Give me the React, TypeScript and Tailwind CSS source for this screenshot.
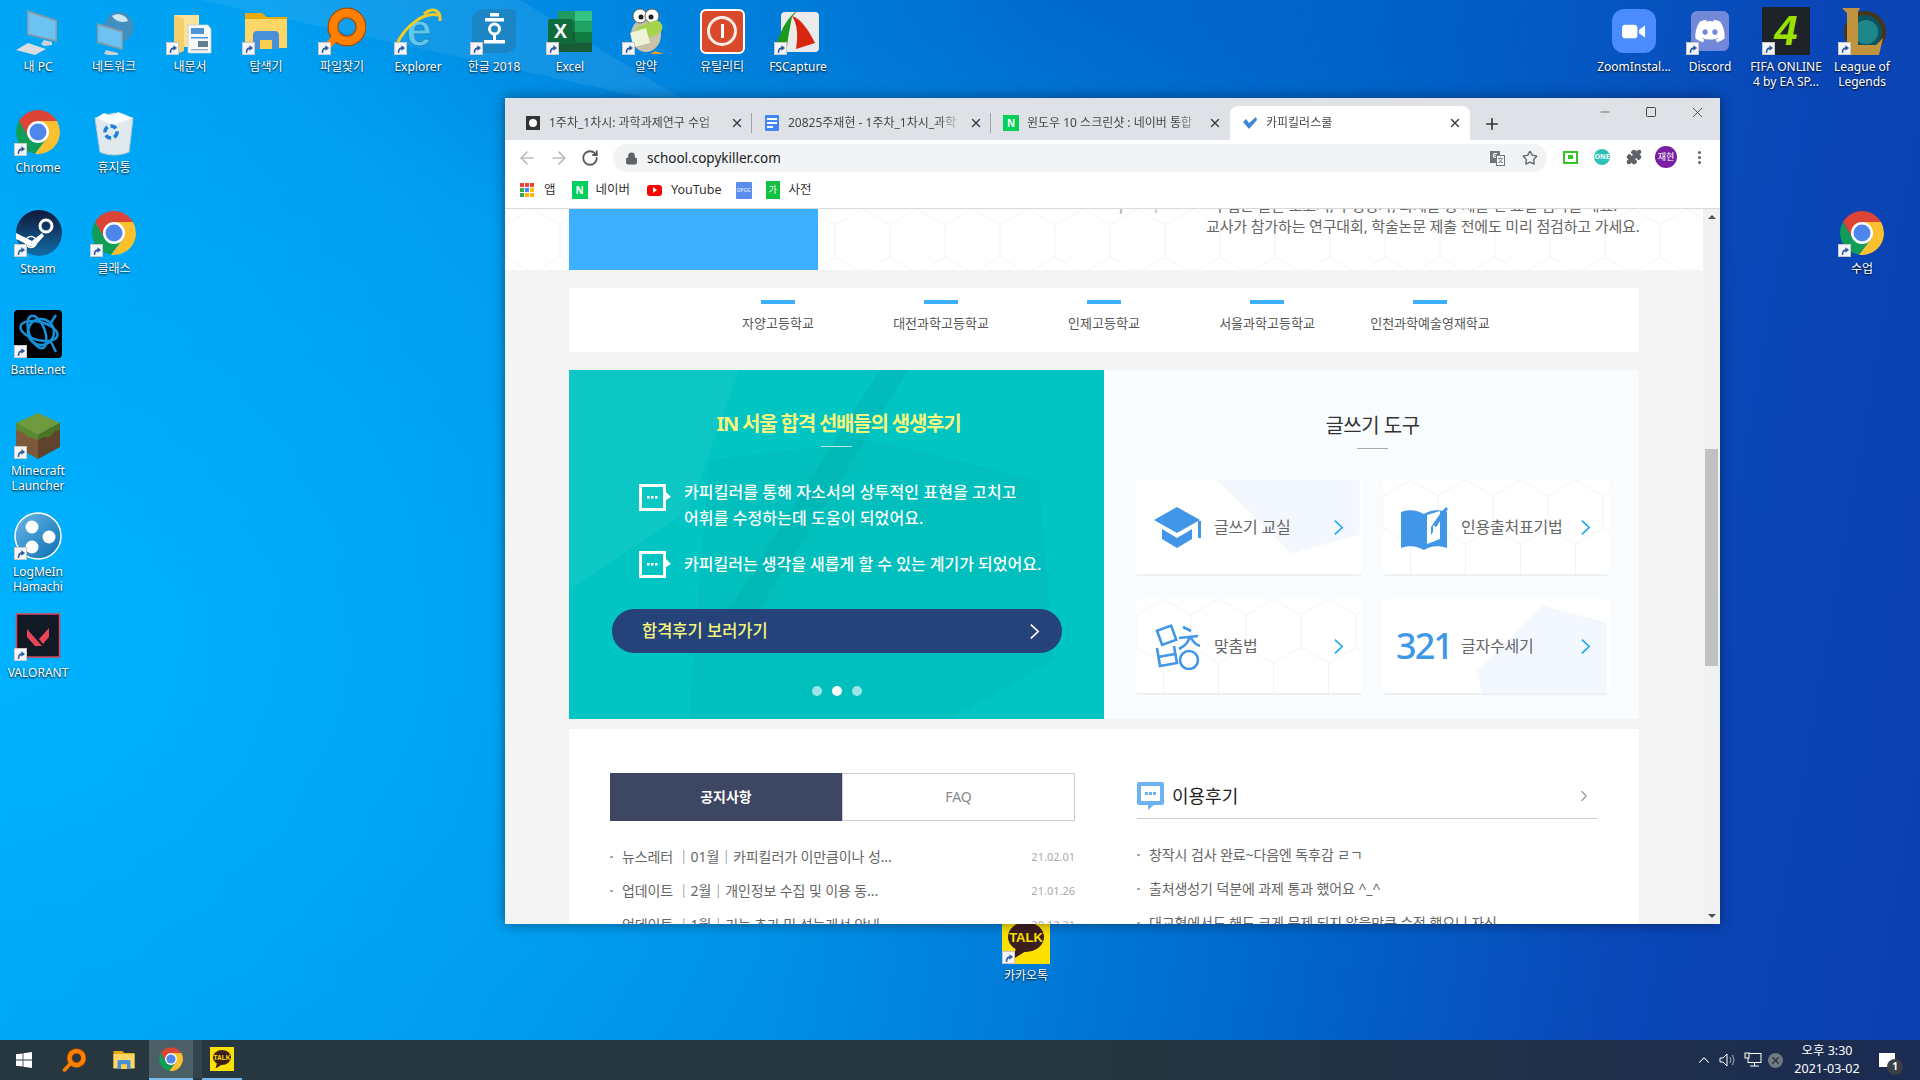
import { ReactNode } from "react";
import { ArrowLeft, ArrowRight, RotateCw, Star, Plus, X, Minus, Square, ChevronRight, ChevronUp, Lock, Puzzle } from "lucide-react";
import { FaDiscord } from "react-icons/fa";

const Shortcut = () => (
  <span className="absolute bottom-0 left-0 flex h-[13px] w-[13px] items-center justify-center border border-[#c8c8c8] bg-[#f4f6fa]">
    <svg viewBox="0 0 12 12" className="h-[11px] w-[11px]">
      <path d="M3 11 C3 7 4 5 7 4.5 V2.5 L11 5.5 L7 8.5 V6.8 C5.5 7 4.6 8.4 4.6 11Z" fill="#2c5aa0" />
    </svg>
  </span>
);

const Chrome = ({ className = "h-12 w-12" }: { className?: string }) => (
  <svg viewBox="0 0 48 48" className={className}>
    <path d="M43 13 A22 22 0 0 0 5 13 L14.5 29.5 L24 13Z" fill="#db4437" />
    <path d="M5 13 A22 22 0 0 0 21 45.8 L33.5 29.5 L14.5 29.5Z" fill="#0f9d58" />
    <path d="M43 13 A22 22 0 0 1 21 45.8 L33.5 29.5 L24 13Z" fill="#fbc02d" />
    <circle cx="24" cy="24" r="11" fill="#fff" />
    <circle cx="24" cy="24" r="8.5" fill="#4f86ec" />
  </svg>
);

const Pc = () => (
  <svg viewBox="0 0 48 48" className="h-12 w-12">
    <path d="M13 3 L43 13 V35 L13 28Z" fill="#8a9ba8" />
    <path d="M14.5 5.5 L41.5 14.5 V33 L14.5 26.5Z" fill="#6cc3f2" />
    <path d="M30 33 L38 35 L38 38 L30 39 L27 37Z" fill="#ccd2d6" />
    <path d="M2 43 L14 36 L32 42 L21 48Z" fill="#d9dde0" />
  </svg>
);

const Network = () => (
  <svg viewBox="0 0 48 48" className="h-12 w-12">
    <circle cx="29" cy="20" r="15" fill="#3f8fc0" />
    <path d="M22 9 C28 5 36 8 38 14 C32 16 26 15 22 9Z" fill="#cfe6ee" />
    <path d="M7 16 L33 24 V43 L7 36Z" fill="#8a9ba8" />
    <path d="M8.5 18.5 L31.5 25.5 V41 L8.5 34.5Z" fill="#6cc3f2" />
    <path d="M16 43 L28 46 L28 50 L14 47Z" fill="#ccd2d6" />
  </svg>
);

const Docs = () => (
  <svg viewBox="0 0 48 48" className="h-12 w-12">
    <path d="M8 8 H33 V40 H16 L8 48Z" fill="#fbe29a" />
    <path d="M8 8 L18 12 V44 L8 48Z" fill="#f4cf6c" />
    <path d="M22 18 H42 L45 22 V46 H22Z" fill="#f7f9fb" stroke="#c5ccd2" strokeWidth=".8" />
    <rect x="25" y="21" width="13" height="6" fill="#4b94d8" />
    <rect x="25" y="30" width="17" height="1.5" fill="#4b94d8" />
    <rect x="32" y="34" width="10" height="6" fill="#5f7e8e" />
    <rect x="25" y="42" width="17" height="1.5" fill="#9fb0bc" />
  </svg>
);

const Explorer = ({ className = "h-12 w-12" }: { className?: string }) => (
  <svg viewBox="0 0 48 48" className={className}>
    <path d="M3 6 H20 L25 10 H45 V40 H3Z" fill="#e8a90a" />
    <path d="M3 12 H45 V41 H3Z" fill="#fcd667" />
    <path d="M11 28 C11 25 13 24 15 24 H33 C35 24 37 25 37 28 V42 H30 V33 H18 V42 H11Z" fill="#4a90d9" />
    <rect x="18" y="33" width="12" height="9" fill="#fbcf4c" />
  </svg>
);

const Finder = ({ className = "h-12 w-12" }: { className?: string }) => (
  <svg viewBox="0 0 48 48" className={className}>
    <circle cx="29" cy="20" r="14" fill="none" stroke="#a14a05" strokeWidth="11" />
    <circle cx="29" cy="20" r="14" fill="none" stroke="#ff7f00" strokeWidth="8.5" />
    <path d="M18 30 L5 44" stroke="#ff7f00" strokeWidth="7" strokeLinecap="round" />
  </svg>
);

const Ie = () => (
  <svg viewBox="0 0 48 48" className="h-12 w-12">
    <text x="25" y="39" textAnchor="middle" fontFamily="'Liberation Sans',sans-serif" fontWeight="700" fontSize="46" fill="#5cc9ee" stroke="#1f86c4" strokeWidth="1">e</text>
    <path d="M2 44 C2 28 26 4 44 8" fill="none" stroke="#f2cc25" strokeWidth="3" />
    <path d="M30 7 C38 0 47 2 46 14" fill="none" stroke="#f2cc25" strokeWidth="3" />
  </svg>
);

const Hangul = () => (
  <svg viewBox="0 0 48 48" className="h-12 w-12">
    <path d="M14 2 H42 C44 2 46 4 46 6 V34 C46 42 42 46 34 46 H12 C6 46 2 42 2 36 V14 C2 7 7 2 14 2Z" fill="#1c85c6" />
    <rect x="20" y="6" width="9" height="3.5" fill="#fff" />
    <rect x="15" y="11" width="19" height="3.5" fill="#fff" />
    <circle cx="24.5" cy="22" r="5" fill="none" stroke="#fff" strokeWidth="3" />
    <rect x="23" y="27" width="3" height="6" fill="#fff" />
    <rect x="14" y="33" width="21" height="3.5" fill="#fff" />
  </svg>
);

const Excel = () => (
  <svg viewBox="0 0 48 48" className="h-12 w-12">
    <rect x="12" y="4" width="34" height="10.5" fill="#1f9a63" />
    <rect x="29" y="4" width="17" height="10.5" fill="#33c481" />
    <rect x="12" y="14.5" width="34" height="10.5" fill="#107c41" />
    <rect x="29" y="14.5" width="17" height="10.5" fill="#21a366" />
    <rect x="12" y="25" width="34" height="10.5" fill="#185c37" />
    <rect x="29" y="25" width="17" height="10.5" fill="#107c41" />
    <rect x="12" y="35.5" width="34" height="9.5" fill="#185c37" />
    <rect x="2" y="12" width="25" height="25" rx="2" fill="#0e6b3a" />
    <text x="14.5" y="31" textAnchor="middle" fontFamily="'Liberation Sans',sans-serif" fontWeight="700" fontSize="20" fill="#fff">X</text>
  </svg>
);

const Pill = () => (
  <svg viewBox="0 0 48 48" className="h-12 w-12">
    <ellipse cx="24" cy="28" rx="15" ry="17" fill="#c8c2a8" />
    <circle cx="18" cy="9" r="7" fill="#fff" stroke="#66604a" />
    <circle cx="30" cy="9" r="7" fill="#fff" stroke="#66604a" />
    <circle cx="19" cy="10" r="2.5" fill="#222" />
    <circle cx="29" cy="10" r="2.5" fill="#222" />
    <rect x="13" y="16" width="28" height="14" rx="7" fill="#a6d34e" transform="rotate(-22 27 23)" />
    <path d="M8 26 L24 21 L28 36 L12 40Z" fill="#eef3d8" />
    <path d="M33 44 L42 47 H28Z" fill="#f0a020" />
  </svg>
);

const Utility = () => (
  <div className="flex h-[45px] w-[45px] items-center justify-center rounded-md border-2 border-white bg-[#d84a2a]">
    <div className="flex h-[30px] w-[30px] items-center justify-center rounded-full border-[3px] border-white/90">
      <div className="h-[14px] w-[3px] bg-white" />
    </div>
  </div>
);

const FsCapture = () => (
  <svg viewBox="0 0 48 48" className="h-12 w-12">
    <rect x="7" y="5" width="38" height="40" rx="4" fill="#eaeaea" />
    <path d="M2 38 C8 20 14 10 24 3 L18 10 C16 20 14 30 13 40Z" fill="#1d9a1d" />
    <path d="M18 9 C28 12 36 26 41 36 L22 42 C24 30 24 18 18 9Z" fill="#d92410" />
  </svg>
);

const Zoom = () => (
  <div className="flex h-11 w-11 items-center justify-center rounded-xl bg-[#4a8cff]">
    <svg viewBox="0 0 28 20" className="h-[17px] w-7">
      <rect x="0" y="2" width="18" height="16" rx="4" fill="#fff" />
      <path d="M20 8 L27 3 V17 L20 12Z" fill="#fff" />
    </svg>
  </div>
);

const Discord = () => (
  <div className="flex h-10 w-[38px] items-center justify-center rounded-md bg-[#7289da]">
    <FaDiscord className="h-8 w-8 text-white" />
  </div>
);

const Fifa = () => (
  <svg viewBox="0 0 48 48" className="h-12 w-12">
    <rect width="48" height="48" fill="#1e2229" />
    <text x="24" y="38" textAnchor="middle" fontFamily="'Liberation Sans',sans-serif" fontStyle="italic" fontWeight="700" fontSize="42" fill="#9be000">4</text>
  </svg>
);

const Lol = () => (
  <svg viewBox="0 0 48 48" className="h-12 w-12">
    <circle cx="27" cy="25" r="19" fill="#0b5560" stroke="#4a3414" strokeWidth="4" />
    <circle cx="28" cy="25" r="12" fill="#2ea8a4" opacity=".6" />
    <path d="M4 1 H22 L20 5 V38 H38 L45 31 L41 48 H6 L9 43 V6Z" fill="#c1933f" />
  </svg>
);

const Recycle = () => (
  <svg viewBox="0 0 48 48" className="h-12 w-12">
    <path d="M5 10 L24 5 L43 10 L39 44 C30 48 18 48 10 44Z" fill="#dfe9ee" stroke="#bccad2" />
    <path d="M6 10 L14 5 L22 8 L28 4 L36 7 L42 10 L24 17Z" fill="#fbfdfe" />
    <circle cx="21" cy="24" r="6" fill="none" stroke="#1f80d8" strokeWidth="3.5" strokeDasharray="6 3" />
  </svg>
);

const Steam = () => (
  <svg viewBox="0 0 48 48" className="h-12 w-12">
    <defs>
      <linearGradient id="stm" x1="0" y1="0" x2="0" y2="1">
        <stop offset="0" stopColor="#11173a" />
        <stop offset="1" stopColor="#0f6da8" />
      </linearGradient>
    </defs>
    <circle cx="25" cy="24" r="23" fill="url(#stm)" />
    <circle cx="32" cy="17" r="6" fill="none" stroke="#fff" strokeWidth="3" />
    <path d="M2 24 L18 32 L28 24 L30 27 L20 38 C14 38 12 34 2 30Z" fill="#fff" />
    <circle cx="17" cy="33" r="5.5" fill="none" stroke="#fff" strokeWidth="1.5" />
  </svg>
);

const Battle = () => (
  <svg viewBox="0 0 48 48" className="h-12 w-12">
    <rect width="48" height="48" rx="4" fill="#000" />
    <g fill="none" stroke="#1491d8" strokeWidth="2.5">
      <ellipse cx="25" cy="21" rx="19" ry="9" transform="rotate(15 25 21)" />
      <ellipse cx="23" cy="22" rx="8" ry="17" transform="rotate(-20 23 22)" />
      <ellipse cx="27" cy="22" rx="13" ry="13" transform="rotate(40 27 22)" />
      <path d="M36 30 L42 42 M42 5 L36 14" />
    </g>
  </svg>
);

const Minecraft = () => (
  <svg viewBox="0 0 48 48" className="h-12 w-12">
    <path d="M24 2 L46 12 L24 24 L2 12Z" fill="#6f9a3e" />
    <path d="M2 12 L24 24 V48 L2 36Z" fill="#7d5a3c" />
    <path d="M46 12 L24 24 V48 L46 36Z" fill="#5f432c" />
    <path d="M2 12 L24 24 V29 L19 27 L14 26 L8 21 L2 19Z" fill="#5a8a32" />
    <path d="M46 12 L24 24 V29 L30 26 L36 26 L41 20 L46 19Z" fill="#4c7428" />
  </svg>
);

const Hamachi = () => (
  <svg viewBox="0 0 48 48" className="h-12 w-12">
    <defs>
      <linearGradient id="ham" x1="0" y1="0" x2="1" y2="1">
        <stop offset="0" stopColor="#6ab8e8" />
        <stop offset="1" stopColor="#0a6eb0" />
      </linearGradient>
    </defs>
    <circle cx="24" cy="24" r="23" fill="url(#ham)" stroke="#fff" strokeWidth="1.5" />
    <circle cx="18" cy="15" r="6.5" fill="#fff" />
    <circle cx="35" cy="25" r="6.5" fill="#fff" />
    <circle cx="18" cy="35" r="6.5" fill="#fff" />
  </svg>
);

const Valorant = () => (
  <svg viewBox="0 0 48 48" className="h-12 w-12">
    <rect x="2.5" y="1" width="43" height="43" fill="#111a24" stroke="#d9465a" strokeWidth="1.5" />
    <path d="M13 16 L28 33 H21 L13 24Z" fill="#ea4458" />
    <path d="M35 15 V24 L29 31 L25 26Z" fill="#ea4458" />
  </svg>
);

const Kakao = ({ className = "h-12 w-12" }: { className?: string }) => (
  <svg viewBox="0 0 48 48" className={className}>
    <rect width="48" height="48" fill="#fce000" />
    <ellipse cx="24" cy="21" rx="18" ry="15" fill="#3c1e1e" />
    <path d="M14 32 L11 43 L24 35Z" fill="#3c1e1e" />
    <text x="24" y="26" textAnchor="middle" fontFamily="'Liberation Sans',sans-serif" fontWeight="700" fontSize="13" fill="#fce000">TALK</text>
  </svg>
);

const deskIcons: { pos: string; label: string; icon: ReactNode; noBadge?: boolean }[] = [
  { pos: "col-start-1 row-start-1", label: "내 PC", icon: <Pc />, noBadge: true },
  { pos: "col-start-2 row-start-1", label: "네트워크", icon: <Network />, noBadge: true },
  { pos: "col-start-3 row-start-1", label: "내문서", icon: <Docs /> },
  { pos: "col-start-4 row-start-1", label: "탐색기", icon: <Explorer /> },
  { pos: "col-start-5 row-start-1", label: "파일찾기", icon: <Finder /> },
  { pos: "col-start-6 row-start-1", label: "Explorer", icon: <Ie /> },
  { pos: "col-start-7 row-start-1", label: "한글 2018", icon: <Hangul /> },
  { pos: "col-start-8 row-start-1", label: "Excel", icon: <Excel /> },
  { pos: "col-start-9 row-start-1", label: "알약", icon: <Pill /> },
  { pos: "col-start-10 row-start-1", label: "유틸리티", icon: <Utility />, noBadge: true },
  { pos: "col-start-11 row-start-1", label: "FSCapture", icon: <FsCapture /> },
  { pos: "col-start-22 row-start-1", label: "ZoomInstal...", icon: <Zoom />, noBadge: true },
  { pos: "col-start-23 row-start-1", label: "Discord", icon: <Discord /> },
  { pos: "col-start-24 row-start-1", label: "FIFA ONLINE\n4 by EA SP...", icon: <Fifa /> },
  { pos: "col-start-25 row-start-1", label: "League of\nLegends", icon: <Lol /> },
  { pos: "col-start-1 row-start-2", label: "Chrome", icon: <Chrome /> },
  { pos: "col-start-2 row-start-2", label: "휴지통", icon: <Recycle />, noBadge: true },
  { pos: "col-start-1 row-start-3", label: "Steam", icon: <Steam /> },
  { pos: "col-start-2 row-start-3", label: "클래스", icon: <Chrome /> },
  { pos: "col-start-25 row-start-3", label: "수업", icon: <Chrome /> },
  { pos: "col-start-1 row-start-4", label: "Battle.net", icon: <Battle /> },
  { pos: "col-start-1 row-start-5", label: "Minecraft\nLauncher", icon: <Minecraft /> },
  { pos: "col-start-1 row-start-6", label: "LogMeIn\nHamachi", icon: <Hamachi /> },
  { pos: "col-start-1 row-start-7", label: "VALORANT", icon: <Valorant /> },
  { pos: "col-start-14 row-start-10", label: "카카오톡", icon: <Kakao /> },
];

function HexPattern({ id, className = "" }: { id: string; className?: string }) {
  return (
    <svg className={`absolute inset-0 h-full w-full ${className}`}>
      <defs>
        <pattern id={id} width="55" height="95" patternUnits="userSpaceOnUse">
          <path d="M0 16 L27.5 0 L55 16 M0 16 V48 M55 16 V48 M0 48 L27.5 64 L55 48 M27.5 64 V95" fill="none" stroke="#f3f4f5" strokeWidth="1" />
        </pattern>
      </defs>
      <rect width="100%" height="100%" fill={`url(#${id})`} />
    </svg>
  );
}

function Tab({ title, icon, active, sep }: { title: string; icon: ReactNode; active?: boolean; sep?: boolean }) {
  return (
    <div className={`relative flex h-[34px] items-center gap-2 pl-3 pr-[8px] ${active ? "w-[240px] rounded-t-lg bg-white" : "w-[239px]"}`}>
      <span className="flex h-4 w-4 shrink-0 items-center justify-center">{icon}</span>
      <span className="flex-1 overflow-hidden whitespace-nowrap text-xs text-[#45474a] [mask-image:linear-gradient(90deg,#000_88%,transparent)]">{title}</span>
      <X className="h-[14px] w-[14px] shrink-0 text-[#3c4043]" strokeWidth={2.4} />
      {sep && <span className="absolute right-0 top-[7px] h-5 w-px bg-[#9fa3a9]" />}
    </div>
  );
}

const NaverIcon = ({ className = "h-4 w-4" }: { className?: string }) => (
  <span className={`flex items-center justify-center bg-[#03cf5d] text-[10px] font-bold leading-none text-white ${className}`}>N</span>
);

function Chevron({ className = "" }: { className?: string }) {
  return (
    <svg viewBox="0 0 12 18" className={`h-[17px] w-[11px] ${className}`}>
      <path d="M2 1.5 L10 9 L2 16.5" fill="none" stroke="currentColor" strokeWidth="1.8" />
    </svg>
  );
}

function SpeechIcon() {
  return (
    <svg viewBox="0 0 33 27" className="h-[27px] w-[33px] shrink-0">
      <rect x="1.5" y="1.5" width="24" height="24" fill="none" stroke="#fff" strokeWidth="3" />
      <path d="M27 8 L32 13 L27 16Z" fill="#fff" />
      <rect x="8" y="12" width="2.5" height="2.5" fill="#fff" />
      <rect x="12" y="12" width="2.5" height="2.5" fill="#fff" />
      <rect x="16" y="12" width="2.5" height="2.5" fill="#fff" />
    </svg>
  );
}

const Cap = () => (
  <svg viewBox="0 0 48 44" className="h-12 w-12">
    <path d="M24 2 L47 15 L24 28 L1 15Z" fill="#4196e8" />
    <path d="M9 24 L24 33 L39 24 V34 L24 43 L9 34Z" fill="#4196e8" />
    <path d="M45 16 H48 V33 H45Z" fill="#4196e8" />
  </svg>
);

const BookPen = () => (
  <svg viewBox="0 0 48 48" className="h-12 w-12">
    <path d="M1 9 C9 6 17 7 24 11 C30 7 38 6 47 9 V45 C38 42 30 43 24 47 C17 43 9 42 1 45Z" fill="#4196e8" />
    <path d="M27 12 L40 8 V36 L27 41Z" fill="#fff" />
    <path d="M31 32 L31 24 L42 8 L46 4 L48 6 L44 12Z" fill="#4196e8" />
    <path d="M33 22 L36 24 L33 30Z" fill="#fff" />
  </svg>
);

const Spell = () => (
  <svg viewBox="0 0 48 48" className="h-12 w-12">
    <g fill="none" stroke="#4196e8" strokeWidth="2.6">
      <rect x="6" y="6" width="15" height="15" transform="rotate(-20 13 13)" />
      <path d="M4 26 L7 44 L24 41 L21 24 M5 35 L22 32" />
      <path d="M30 5 L38 9 M26 16 L45 14 M37 14 C36 20 32 24 26 27 M37 14 C40 20 43 23 47 24" />
      <circle cx="36" cy="38" r="9" />
    </g>
  </svg>
);

function ToolCard({ label, icon, deco }: { label: string; icon: ReactNode; deco?: ReactNode }) {
  return (
    <div className="relative flex h-[96px] items-center overflow-hidden rounded-[3px] border-b-2 border-[#eef0f3] bg-white pl-[17px] pr-[18px]">
      {deco}
      <span className="relative flex h-12 w-12 shrink-0 items-center justify-center">{icon}</span>
      <span className="relative ml-[13px] flex-1 text-base tracking-[-0.2px] text-[#666]">{label}</span>
      <Chevron className="relative text-[#1fa7ee]" />
    </div>
  );
}

function NoticeRow({ text, date }: { text: string; date?: string }) {
  return (
    <div className="flex h-[34px] items-center">
      <span className="mr-[9px] h-[2px] w-[3px] shrink-0 bg-[#aaa]" />
      <span className="flex-1 whitespace-nowrap text-sm tracking-[-0.1px] text-[#666]">{text}</span>
      {date && <span className="text-[11px] text-[#aaa]">{date}</span>}
    </div>
  );
}

function Page() {
  return (
    <div className="flex-1 overflow-hidden bg-[#f4f4f4]">
      {/* hero bottom, cut by the scroll position */}
      <section className="relative h-[61px] overflow-hidden bg-white">
        <HexPattern id="hero" />
        <div className="relative mx-auto flex w-[1070px] justify-between">
          <div className="h-[61px] w-[249px] bg-[#3cb0ff]" />
          <span className="absolute left-[551px] top-0 h-[5px] w-[2px] rotate-12 bg-[#bbb]" />
          <span className="absolute left-[586px] top-0 h-[4px] w-[2px] -rotate-12 bg-[#ccc]" />
          <div className="-mt-[14px] w-[433px] text-[15px] leading-[21px] tracking-[-0.15px] text-[#666]">
            <p className="ml-[7px] whitespace-nowrap">수업은 물론 보고서, 수행평가, 과제물 등 제출 전 표절 검사를 해요.</p>
            <p className="whitespace-nowrap">교사가 참가하는 연구대회, 학술논문 제출 전에도 미리 점검하고 가세요.</p>
          </div>
        </div>
      </section>

      <section className="mx-auto mt-[18px] flex h-[64px] w-[1070px] justify-center bg-white">
        {["자양고등학교", "대전과학고등학교", "인제고등학교", "서울과학고등학교", "인천과학예술영재학교"].map((name) => (
          <div key={name} className="flex w-[163px] flex-col items-center pt-3">
            <div className="h-1 w-[34px] bg-[#3cb0ff]" />
            <span className="mt-[10px] text-[13px] leading-[18px] text-[#555]">{name}</span>
          </div>
        ))}
      </section>

      <section className="mx-auto mt-[18px] flex h-[349px] w-[1070px]">
        <div className="relative w-[535px] overflow-hidden bg-[#00c5c2]">
          <svg className="absolute inset-0 h-full w-full" viewBox="0 0 535 349">
            <path d="M0 0 H170 L120 140 L0 220Z" fill="#fff" opacity=".05" />
            <path d="M140 90 L300 70 L470 110 L485 290 L380 349 H120 Z" fill="#00a9a8" opacity=".18" />
            <path d="M310 0 H340 L190 240 L160 240Z" fill="#00a9a8" opacity=".25" />
          </svg>
          <div className="relative pt-[40px]">
            <h2 className="pl-1 text-center text-xl font-bold leading-7 tracking-[-1.2px] text-[#f6f67c]">IN 서울 합격 선배들의 생생후기</h2>
            <div className="mx-auto mt-[8px] h-px w-[31px] bg-white/70" />
            <div className="mt-[32px] flex gap-3 pl-[70px]">
              <span className="mt-[5px]"><SpeechIcon /></span>
              <p className="text-base font-medium leading-[26px] tracking-[0.1px] text-white">
                카피킬러를 통해 자소서의 상투적인 표현을 고치고
                <br />
                어휘를 수정하는데 도움이 되었어요.
              </p>
            </div>
            <div className="mt-[20px] flex gap-3 pl-[70px]">
              <span className="mt-[0px]"><SpeechIcon /></span>
              <p className="text-base font-medium leading-[26px] text-white">카피킬러는 생각을 새롭게 할 수 있는 계기가 되었어요.</p>
            </div>
            <div className="ml-[43px] mt-[31px] flex h-[44px] w-[450px] items-center justify-between rounded-full bg-[#25427a] pl-[30px] pr-[22px]">
              <span className="text-[16.5px] font-medium text-[#f6f67c]">합격후기 보러가기</span>
              <Chevron className="text-white" />
            </div>
            <div className="mt-[33px] flex justify-center gap-[10px]">
              <span className="h-[10px] w-[10px] rounded-full bg-white/60" />
              <span className="h-[10px] w-[10px] rounded-full bg-white" />
              <span className="h-[10px] w-[10px] rounded-full bg-white/60" />
            </div>
          </div>
        </div>

        <div className="w-[535px] bg-[#f9fcff] pl-[32px] pr-[30px] pt-[42px]">
          <h2 className="text-center text-xl leading-7 tracking-[-0.5px] text-[#333]">글쓰기 도구</h2>
          <div className="mx-auto mt-[8px] h-px w-[31px] bg-[#aaa]" />
          <div className="mt-[31px] grid grid-cols-[226px_226px] gap-x-[21px] gap-y-[23px]">
            <ToolCard
              label="글쓰기 교실"
              icon={<Cap />}
              deco={
                <svg viewBox="0 0 226 96" className="absolute inset-0 h-full w-full">
                  <path d="M80 0 H226 V56 L156 75Z" fill="#f3f8ff" />
                </svg>
              }
            />
            <ToolCard label="인용출처표기법" icon={<BookPen />} deco={<HexPattern id="card2" />} />
            <ToolCard label="맞춤법" icon={<Spell />} deco={<HexPattern id="card3" />} />
            <ToolCard
              label="글자수세기"
              icon={<span className="text-[36px] font-medium leading-none tracking-[-2px] text-[#3f98e6]">321</span>}
              deco={
                <svg viewBox="0 0 226 96" className="absolute inset-0 h-full w-full">
                  <path d="M161 7 L226 24 V96 H98 L94 74Z" fill="#f3f8ff" />
                </svg>
              }
            />
          </div>
        </div>
      </section>

      <section className="mx-auto mt-[10px] flex w-[1070px] bg-white pl-[41px] pt-[44px]">
        <div className="w-[465px]">
          <div className="flex h-[48px]">
            <div className="flex w-[232px] items-center justify-center bg-[#3d4663] text-sm font-bold text-white">공지사항</div>
            <div className="flex w-[233px] items-center justify-center border border-[#ccc] text-sm text-[#888]">FAQ</div>
          </div>
          <div className="mt-[19px]">
            <NoticeRow text="뉴스레터 │01월│카피킬러가 이만큼이나 성..." date="21.02.01" />
            <NoticeRow text="업데이트 │2월│개인정보 수집 및 이용 동..." date="21.01.26" />
            <NoticeRow text="업데이트 │1월│기능 추가 및 성능개선 안내" date="20.12.31" />
          </div>
        </div>
        <div className="ml-[62px] w-[460px]">
          <div className="flex h-[46px] items-center border-b border-[#ccc] pr-[4px]">
            <svg viewBox="0 0 27 28" className="h-7 w-[27px]">
              <path d="M2 0 H25 Q27 0 27 2 V21 Q27 23 25 23 H17 L11 28 V23 H2 Q0 23 0 21 V2 Q0 0 2 0Z" fill="#6db3f2" />
              <rect x="4" y="4" width="19" height="15" fill="#fff" />
              <rect x="8" y="10" width="3" height="3" fill="#6db3f2" />
              <rect x="12" y="10" width="3" height="3" fill="#6db3f2" />
              <rect x="16" y="10" width="3" height="3" fill="#6db3f2" />
            </svg>
            <span className="ml-2 flex-1 text-lg text-[#222]">이용후기</span>
            <ChevronRight className="h-[18px] w-[18px] text-[#999]" strokeWidth={1.6} />
          </div>
          <div className="mt-[19px]">
            <NoticeRow text="창작시 검사 완료~다음엔 독후감 ㄹㄱ" />
            <NoticeRow text="출처생성기 덕분에 과제 통과 했어요 ^_^" />
            <NoticeRow text="대교협에서도 해도 크게 문제 되지 않을만큼 수정 했으니 자신..." />
          </div>
        </div>
      </section>
    </div>
  );
}

function BrowserWindow() {
  return (
    <div className="absolute left-[505px] top-[98px] flex h-[826px] w-[1215px] flex-col bg-white shadow-[0_0_12px_rgba(0,0,0,0.45)]">
      {/* tabs */}
      <div className="relative flex h-[42px] items-end bg-[#dee1e6] pl-2">
        <Tab
          sep
          title="1주차_1차시: 과학과제연구 수업"
          icon={
            <span className="flex h-[14px] w-[14px] items-center justify-center bg-[#333]">
              <span className="h-2 w-2 rounded-full bg-white" />
            </span>
          }
        />
        <Tab
          sep
          title="20825주재현 - 1주차_1차시_과학"
          icon={
            <span className="flex h-4 w-[14px] flex-col justify-center gap-[2px] rounded-[1px] bg-[#4285f4] px-[2px]">
              <span className="h-[2px] bg-white" />
              <span className="h-[2px] bg-white" />
              <span className="h-[2px] w-[6px] bg-white" />
            </span>
          }
        />
        <Tab title="윈도우 10 스크린샷 : 네이버 통합" icon={<NaverIcon />} />
        <Tab
          active
          title="카피킬러스쿨"
          icon={
            <svg viewBox="0 0 16 16" className="h-4 w-4">
              <path d="M1 7 L4 4 L7 8 L14 2 L15 5 L7 14Z" fill="#3f86d8" />
            </svg>
          }
        />
        <Plus className="mb-[7px] ml-[13px] h-[18px] w-[18px] text-[#333]" strokeWidth={2.2} />
        <div className="absolute right-0 top-0 flex items-center">
          <span className="flex h-[28px] w-[46px] items-center justify-center"><Minus className="h-[14px] w-[14px] text-[#222]" strokeWidth={1} /></span>
          <span className="flex h-[28px] w-[46px] items-center justify-center"><Square className="h-[12px] w-[12px] text-[#222]" strokeWidth={1.6} /></span>
          <span className="flex h-[28px] w-[46px] items-center justify-center"><X className="h-[17px] w-[17px] text-[#222]" strokeWidth={1} /></span>
        </div>
      </div>

      {/* toolbar */}
      <div className="flex h-[32px] items-end">
        <div className="flex w-[108px] items-center gap-[12px] pb-[4px] pl-[12px] pt-0">
          <ArrowLeft className="h-5 w-5 text-[#b8babd]" />
          <ArrowRight className="h-5 w-5 text-[#b8babd]" />
          <RotateCw className="h-[18px] w-[18px] text-[#55585c]" strokeWidth={2.4} />
        </div>
        <div className="flex h-7 w-[934px] items-center rounded-full bg-[#f1f3f4] pl-[12px] pr-[9px]">
          <Lock className="h-[13px] w-[13px] text-[#5f6368]" fill="#5f6368" />
          <span className="ml-[9px] flex-1 pt-px text-[13.5px] text-[#202124]">school.copykiller.com</span>
          <span className="relative h-[15px] w-[15px]">
            <span className="absolute left-0 top-0 flex h-[12px] w-[10px] items-center justify-center bg-[#70757a] text-[7px] font-bold text-white">G</span>
            <span className="absolute bottom-0 right-0 flex h-[11px] w-[9px] items-center justify-center border border-[#70757a] bg-white text-[6px] text-[#555]">文</span>
          </span>
          <Star className="ml-[17px] h-[16px] w-[16px] text-[#5f6368]" strokeWidth={2} />
        </div>
        <div className="flex flex-1 items-center pb-[4px] pl-[7px]">
          <span className="flex w-[32px] justify-center">
            <span className="flex h-[13px] w-[15px] items-center justify-center border-2 border-[#34c724] bg-white"><span className="h-[4px] w-[5px] bg-[#34c724]" /></span>
          </span>
          <span className="flex w-[32px] justify-center">
            <span className="flex h-4 w-4 items-center justify-center overflow-hidden rounded-full bg-[#2dc1b8] text-[7px] font-bold text-white">ONE</span>
          </span>
          <span className="flex w-[32px] justify-center">
            <Puzzle className="h-4 w-4 text-[#5f6368]" fill="#5f6368" />
          </span>
          <span className="flex w-[32px] justify-center">
            <span className="flex h-[22px] w-[22px] items-center justify-center rounded-full bg-[#7b1fa2] text-[9px] text-white">재현</span>
          </span>
          <span className="flex w-[34px] flex-col items-center gap-[2px]">
            <span className="h-[3px] w-[3px] rounded-full bg-[#5f6368]" />
            <span className="h-[3px] w-[3px] rounded-full bg-[#5f6368]" />
            <span className="h-[3px] w-[3px] rounded-full bg-[#5f6368]" />
          </span>
        </div>
      </div>

      {/* bookmarks */}
      <div className="flex h-[37px] items-center border-b border-[#d8d9db] pl-[15px] text-[12.5px] text-[#333]">
        <span className="grid h-[14px] w-[14px] grid-cols-3 gap-[1px]">
          {["bg-[#ea4335]", "bg-[#ea4335]", "bg-[#ea4335]", "bg-[#34a853]", "bg-[#4285f4]", "bg-[#fbbc05]", "bg-[#34a853]", "bg-[#fbbc05]", "bg-[#fbbc05]"].map((c, i) => (
            <span key={i} className={c} />
          ))}
        </span>
        <span className="ml-[10px]">앱</span>
        <NaverIcon className="ml-[16px] h-[18px] w-4" />
        <span className="ml-2">네이버</span>
        <span className="ml-[17px] flex h-[11px] w-[15px] items-center justify-center rounded-[3px] bg-[#f00]">
          <span className="h-0 w-0 border-y-[3px] border-l-[4px] border-y-transparent border-l-white" />
        </span>
        <span className="ml-[9px]">YouTube</span>
        <span className="ml-[14px] flex h-[17px] w-4 items-center justify-center rounded-[1px] bg-[#5b8def] text-[5px] font-bold leading-none text-white/70">OPGG</span>
        <span className="ml-[14px] flex h-[18px] w-[14px] items-center justify-center bg-[#12c13f] text-[9px] text-white">가</span>
        <span className="ml-[9px]">사전</span>
      </div>

      {/* page + scrollbar */}
      <div className="flex min-h-0 flex-1">
        <Page />
        <div className="relative flex w-[17px] flex-col items-center justify-between bg-[#f1f1f1] py-[6px]">
          <span className="h-0 w-0 border-x-[4px] border-b-[4px] border-x-transparent border-b-[#505050]" />
          <span className="absolute left-[2px] top-[240px] h-[217px] w-[13px] bg-[#c1c1c1]" />
          <span className="h-0 w-0 border-x-[4px] border-t-[4px] border-x-transparent border-t-[#505050]" />
        </div>
      </div>
    </div>
  );
}

function Taskbar() {
  return (
    <div className="relative flex h-10 items-stretch bg-[linear-gradient(90deg,#26373f,#26373f_55%,#1b2b52)] text-xs text-white">
      <div className="flex w-[48px] items-center justify-center">
        <svg viewBox="0 0 16 16" className="h-4 w-4">
          <path d="M0 2.3 L6.6 1.4 V7.6 H0Z M7.4 1.3 L16 0 V7.6 H7.4Z M0 8.4 H6.6 V14.6 L0 13.7Z M7.4 8.4 H16 V16 L7.4 14.7Z" fill="#fff" />
        </svg>
      </div>
      <div className="flex w-[52px] items-center justify-center"><Finder className="h-6 w-6" /></div>
      <div className="flex w-[48px] items-center justify-center"><Explorer className="h-6 w-6" /></div>
      <div className="ml-px flex w-[44px] items-center justify-center border-b-2 border-[#76b9ed] bg-[#4c5f66]"><Chrome className="h-[26px] w-[26px]" /></div>
      <div className="w-[9px] border-b-2 border-[#26373f] bg-[#32444c]" />
      <div className="flex w-[40px] items-center justify-center border-b-2 border-[#76b9ed]"><Kakao className="h-6 w-6" /></div>
      <div className="ml-auto flex items-center">
        <ChevronUp className="h-[18px] w-[18px]" strokeWidth={1.4} />
        <svg viewBox="0 0 18 16" className="ml-[6px] h-4 w-[18px]" fill="none" stroke="#fff" strokeWidth="1">
          <path d="M1 6 H4 L8 2 V14 L4 10 H1Z" />
          <path d="M11 5 Q13 8 11 11 M13.5 3 Q16.5 8 13.5 13" opacity=".6" />
        </svg>
        <svg viewBox="0 0 18 16" className="ml-[7px] h-4 w-[18px]" fill="none" stroke="#fff" strokeWidth="1">
          <rect x="4" y="1.5" width="13" height="9" />
          <path d="M6 14 H15 M10.5 10.5 V14" />
          <rect x="1" y="1" width="4" height="5" fill="#26373f" />
        </svg>
        <span className="ml-[6px] flex h-[15px] w-[15px] items-center justify-center rounded-full bg-[#707a80]">
          <X className="h-[11px] w-[11px] text-[#26373f]" strokeWidth={3} />
        </span>
        <div className="ml-[9px] flex w-[70px] flex-col items-center whitespace-nowrap text-[12.5px] leading-[18px]">
          <span>오후 3:30</span>
          <span>2021-03-02</span>
        </div>
        <div className="relative ml-[17px] mr-[25px] h-[14px] w-4 bg-white">
          <span className="absolute -bottom-[8px] left-[8px] flex h-4 w-4 items-center justify-center rounded-full bg-[#3a3f45] text-[10px] font-bold">1</span>
        </div>
      </div>
    </div>
  );
}

export default function App() {
  return (
    <div className="relative flex h-[1080px] w-[1920px] flex-col overflow-hidden bg-[radial-gradient(ellipse_800px_320px_at_55%_0%,rgba(0,70,180,0.45),transparent),radial-gradient(ellipse_900px_700px_at_0%_60%,#00b2ff_0%,transparent_100%),linear-gradient(100deg,#00a4f5_0%,#0090e6_45%,#0068cc_68%,#0a47b8_85%,#0b3fb0_100%)] font-['Noto_Sans','Noto_Sans_CJK_KR',sans-serif]">
      <svg className="absolute inset-0 h-full w-full" viewBox="0 0 1920 1080">
        <path d="M200 0 L700 110 L520 0Z" fill="#fff" opacity=".07" />
      </svg>
      <main className="relative flex-1">
        <div className="grid grid-cols-[repeat(25,76px)] grid-rows-[repeat(10,101px)] text-xs leading-[15px] text-white">
          {deskIcons.map((d) => (
            <div key={d.pos} className={`flex flex-col items-center pt-[7px] ${d.pos}`}>
              <div className="relative flex h-12 w-12 items-center justify-center">
                {d.icon}
                {!d.noBadge && <Shortcut />}
              </div>
              <span className="mt-[3.5px] whitespace-pre-line text-center [text-shadow:0_1px_2px_rgba(0,0,0,0.95)]">{d.label}</span>
            </div>
          ))}
        </div>
        <BrowserWindow />
      </main>
      <Taskbar />
    </div>
  );
}
